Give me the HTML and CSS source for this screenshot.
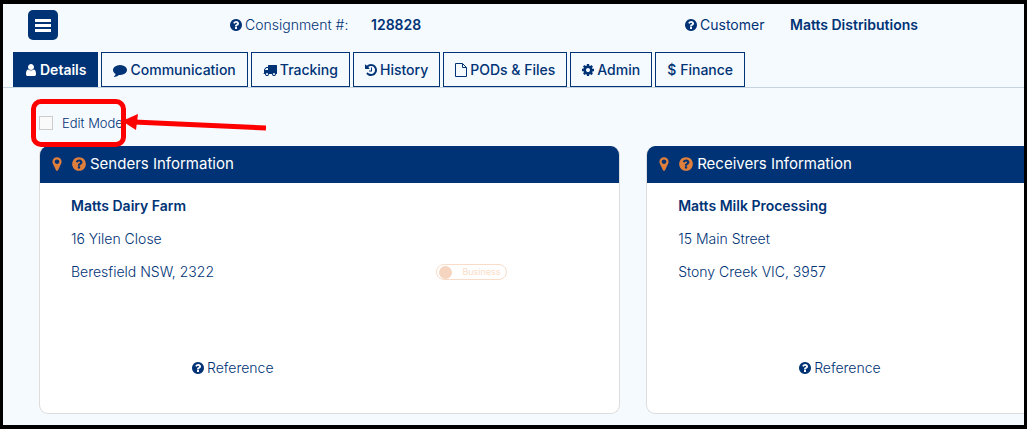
FILE: index.html
```html
<!DOCTYPE html>
<html lang="en">
<head>
    <meta charset="UTF-8">
    <meta name="viewport" content="width=device-width, initial-scale=1.0">
    <title>Consignment 128828</title>
    <link rel="stylesheet" href="styles.css">
</head>
<body>
    <!-- Shared icons -->
    <svg class="sprite" aria-hidden="true">
        <symbol id="icon-question" viewBox="128 0 1536 1792"><path d="M1024 1376v-192q0-14-9-23t-23-9h-192q-14 0-23 9t-9 23v192q0 14 9 23t23 9h192q14 0 23-9t9-23zm256-672q0-88-55.5-163t-138.5-116-170-41q-243 0-371 213-15 24 8 42l132 100q7 6 19 6 16 0 25-12 53-68 86-92 34-24 86-24 48 0 85.5 26t37.5 59q0 38-20 61t-68 45q-63 28-115.5 86.5t-52.5 125.5v36q0 14 9 23t23 9h192q14 0 23-9t9-23q0-19 21.5-49.5t54.5-49.5q32-18 49-28.5t46-35 44.5-48 28-60.5 12.5-81zm384 192q0 209-103 385.5t-279.5 279.5-385.5 103-385.5-103-279.5-279.5-103-385.5 103-385.5 279.5-279.5 385.5-103 385.5 103 279.5 279.5 103 385.5z"/></symbol>
        <symbol id="icon-marker" viewBox="384 0 1024 1792"><path d="M1152 640q0-106-75-181t-181-75-181 75-75 181 75 181 181 75 181-75 75-181zm256 0q0 109-33 179l-364 774q-16 33-47.5 52t-67.5 19-67.5-19-46.5-52l-365-774q-33-70-33-179 0-212 150-362t362-150 362 150 150 362z"/></symbol>
    </svg>

    <div class="page">
        <header class="topbar">
            <div>
                <button class="menu-btn" type="button" aria-label="Menu">
                    <svg viewBox="0 0 16 13"><path d="M0 0h16v3H0zM0 5h16v3H0zM0 10h16v3H0z"/></svg>
                </button>
            </div>
            <div class="field-label light"><svg class="icon"><use href="#icon-question"/></svg>Consignment #:</div>
            <div class="field-value">128828</div>
            <div class="field-label"><svg class="icon"><use href="#icon-question"/></svg>Customer</div>
            <div class="field-value">Matts Distributions</div>
        </header>

        <nav class="tabs">
            <a class="tab active" href="#details"><svg class="icon" viewBox="192 0 1408 1792"><path d="M1536 1399q0 109-62.5 187t-150.5 78h-854q-88 0-150.5-78t-62.5-187q0-85 8.5-160.5t31.5-152 58.5-131 94-89 134.5-34.5q131 128 313 128t313-128q76 0 134.5 34.5t94 89 58.5 131 31.5 152 8.5 160.5zm-256-887q0 159-112.5 271.5t-271.5 112.5-271.5-112.5-112.5-271.5 112.5-271.5 271.5-112.5 271.5 112.5 112.5 271.5z"/></svg>Details</a>
            <a class="tab" href="#communication"><svg class="icon wide" viewBox="0 0 1792 1792"><path d="M1792 896q0 174-120 321.5t-326 233-450 85.5q-70 0-145-8-198 175-460 242-49 14-114 22-17 2-30.5-9t-17.5-29v-1q-3-4-.5-12t2-10 4.5-9.5l6-9 7-8.5 8-9q7-8 31-34.5t34.5-38 31-39.5 32.5-51 27-59 26-76q-157-89-247.5-220t-90.5-281q0-130 71-248.5t191-204.5 286-136.5 348-50.5q244 0 450 85.5t326 233 120 321.5z"/></svg>Communication</a>
            <a class="tab" href="#tracking"><svg class="icon wide" viewBox="0 0 1792 1792"><path d="M640 1408q0-52-38-90t-90-38-90 38-38 90 38 90 90 38 90-38 38-90zm-384-512h384v-256h-158q-13 0-22 9l-195 195q-9 9-9 22v30zm1280 512q0-52-38-90t-90-38-90 38-38 90 38 90 90 38 90-38 38-90zm256-1088v1024q0 15-4 26.5t-13.5 18.5-16.5 11.5-23.5 6-22.5 2-25.5 0-22.5-.5q0 106-75 181t-181 75-181-75-75-181h-384q0 106-75 181t-181 75-181-75-75-181h-64q-3 0-22.5.5t-25.5 0-22.5-2-23.5-6-16.5-11.5-13.5-18.5-4-26.5q0-26 19-45t45-19v-320q0-8-.5-35t0-38 2.5-34.5 6.5-37 14-30.5 22.5-30l198-198q19-19 50.5-32t58.5-13h160v-192q0-26 19-45t45-19h1024q26 0 45 19t19 45z"/></svg>Tracking</a>
            <a class="tab" href="#history"><svg class="icon" viewBox="128 0 1536 1792"><path d="M1664 896q0 156-61 298t-164 245-245 164-298 61q-172 0-327-72.5t-264-204.5q-7-10-6.5-22.5t8.5-20.5l137-138q10-9 25-9 16 2 23 12 73 95 179 147t225 52q104 0 198.5-40.5t163.5-109.5 109.5-163.5 40.5-198.5-40.5-198.5-109.5-163.5-163.5-109.5-198.5-40.5q-98 0-188 35.5t-160 101.5l137 138q31 30 14 69-17 40-59 40h-448q-26 0-45-19t-19-45v-448q0-42 40-59 39-17 69 14l130 129q107-101 244.5-156.5t284.5-55.5q156 0 298 61t245 164 164 245 61 298zm-640-288v448q0 14-9 23t-23 9h-320q-14 0-23-9t-9-23v-64q0-14 9-23t23-9h224v-352q0-14 9-23t23-9h64q14 0 23 9t9 23z"/></svg>History</a>
            <a class="tab" href="#files"><svg class="icon outline" viewBox="0 0 12 14"><path d="M.5.5h7l4 4v9H.5zM7.5.5v4h4"/></svg>PODs &amp; Files</a>
            <a class="tab" href="#admin"><svg class="icon" viewBox="128 0 1536 1792"><path d="M1152 896q0-106-75-181t-181-75-181 75-75 181 75 181 181 75 181-75 75-181zm512-109v222q0 12-8 23t-20 13l-185 28q-19 54-39 91 35 50 107 138 10 12 10 25t-9 23q-27 37-99 108t-94 71q-12 0-26-9l-138-108q-44 23-91 38-16 136-29 186-7 28-36 28h-222q-14 0-24.5-8.5t-11.5-21.5l-28-184q-49-16-90-37l-141 107q-10 9-25 9-14 0-25-11-126-114-165-168-7-10-7-23 0-12 8-23 15-21 51-66.5t54-70.5q-27-50-41-99l-183-27q-13-2-21-12.5t-8-23.5v-222q0-12 8-23t19-13l186-28q14-46 39-92-40-57-107-138-10-12-10-24 0-10 9-23 26-36 98.5-107.5t94.5-71.5q13 0 26 10l138 107q44-23 91-38 16-136 29-186 7-28 36-28h222q14 0 24.5 8.5t11.5 21.5l28 184q49 16 90 37l142-107q9-9 24-9 13 0 25 10 129 119 165 170 7 8 7 22 0 12-8 23-15 21-51 66.5t-54 70.5q26 50 41 98l183 28q13 2 21 12.5t8 23.5z"/></svg>Admin</a>
            <a class="tab" href="#finance"><span class="dollar">$</span>Finance</a>
        </nav>

        <main class="content">
            <div class="edit-row">
                <label class="edit-mode"><input type="checkbox"> Edit Mode</label>
                <div class="highlight"></div>
                <svg class="arrow" viewBox="0 0 144 24"><path d="M12 8L144 14" stroke="#ff0000" stroke-width="5"/><path d="M0 7L16 0L14 16z" fill="#ff0000"/></svg>
            </div>

            <div class="cards">
                <section class="card">
                    <h2 class="card-header"><svg class="icon marker"><use href="#icon-marker"/></svg><svg class="icon help"><use href="#icon-question"/></svg>Senders Information</h2>
                    <div class="card-body">
                        <p class="name">Matts Dairy Farm</p>
                        <p>16 Yilen Close</p>
                        <div class="suburb-row">
                            <p>Beresfield NSW, 2322</p>
                            <label class="toggle"><input type="checkbox" disabled>Business</label>
                        </div>
                        <div class="reference"><svg class="icon"><use href="#icon-question"/></svg>Reference</div>
                    </div>
                </section>

                <section class="card">
                    <h2 class="card-header"><svg class="icon marker"><use href="#icon-marker"/></svg><svg class="icon help"><use href="#icon-question"/></svg>Receivers Information</h2>
                    <div class="card-body">
                        <p class="name">Matts Milk Processing</p>
                        <p>15 Main Street</p>
                        <div class="suburb-row">
                            <p>Stony Creek VIC, 3957</p>
                        </div>
                        <div class="reference"><svg class="icon"><use href="#icon-question"/></svg>Reference</div>
                    </div>
                </section>
            </div>
        </main>
    </div>
</body>
</html>
```
FILE: styles.css
```css
:root {
    --navy: #003375;
    --orange: #e07f3c;
    --page-bg: #f5faff;
    --line: #c5d3de;
}

* {
    margin: 0;
    padding: 0;
    box-sizing: border-box;
}

body {
    font-family: 'Inter', 'Liberation Sans', sans-serif;
    font-size: 14px;
    line-height: 20px;
    color: var(--navy);
}

.sprite {
    display: none;
}

.page {
    min-height: 100vh;
    border: 4px solid #000;
    border-width: 4px 3px;
    background-color: var(--page-bg);
    overflow: hidden;
}

.icon {
    width: 12px;
    height: 14px;
    margin-right: 3px;
    fill: currentColor;
    flex-shrink: 0;
}

.icon.wide {
    width: 14px;
}

.icon.outline {
    fill: none;
    stroke: currentColor;
}

/* Top bar */
.topbar {
    display: grid;
    grid-template-columns: 202fr 141fr 314fr 105fr 234fr;
    align-items: center;
    padding: 6px 0 12px 25px;
}

.menu-btn {
    display: flex;
    align-items: center;
    justify-content: center;
    width: 30px;
    height: 30px;
    border: none;
    border-radius: 5px;
    background-color: var(--navy);
    cursor: pointer;
}

.menu-btn svg {
    width: 16px;
    height: 13px;
    fill: #fff;
}

.field-label {
    display: flex;
    align-items: center;
    white-space: nowrap;
}

.light {
    font-weight: 300;
}

.field-value {
    font-weight: 600;
    white-space: nowrap;
}

/* Tabs */
.tabs {
    display: flex;
    gap: 3px;
    padding-left: 10px;
    border-bottom: 1px solid var(--line);
}

.tab {
    display: flex;
    align-items: center;
    height: 35px;
    padding: 0 11px;
    border: 1px solid var(--navy);
    font-weight: 500;
    color: var(--navy);
    text-decoration: none;
    white-space: nowrap;
}

.tab.active {
    background-color: var(--navy);
    color: #fff;
    font-weight: 600;
}

.dollar {
    margin-right: 4px;
}

/* Edit mode */
.content {
    padding-left: 36px;
}

.edit-row {
    position: relative;
    padding: 25px 0 11px;
}

.edit-mode {
    display: inline-flex;
    align-items: center;
    gap: 9px;
    font-size: 13px;
    font-weight: 300;
}

.edit-mode input {
    appearance: none;
    width: 14px;
    height: 14px;
    border: 1px solid #ccc;
    background-color: #fafafa;
}

.highlight {
    position: absolute;
    top: 11px;
    left: -8px;
    width: 95px;
    height: 48px;
    border: 5px solid #ff0000;
    border-radius: 10px;
    z-index: 1;
}

.arrow {
    position: absolute;
    top: 26px;
    left: 83px;
    width: 144px;
    height: 24px;
    z-index: 1;
}

/* Cards */
.cards {
    display: flex;
    gap: 26px;
}

.card {
    flex: 0 0 59%;
    border: 1px solid #ddd;
    border-top: none;
    border-radius: 9px;
    background-color: #fff;
    overflow: hidden;
}

.card-header {
    display: flex;
    align-items: center;
    height: 37px;
    padding: 0 0 2px 13px;
    margin: 0 -1px;
    background-color: var(--navy);
    color: #fff;
    font-size: 15px;
    font-weight: 400;
}

.card-header .icon {
    height: 16px;
    color: var(--orange);
}

.card-header .marker {
    width: 10px;
    margin-right: 10px;
}

.card-header .help {
    width: 14px;
    margin-right: 4px;
}

.card-body {
    display: flex;
    flex-direction: column;
    gap: 13px;
    padding: 13px 31px 35px;
    font-weight: 300;
}

.name {
    font-weight: 600;
}

.suburb-row {
    display: grid;
    grid-template-columns: 366fr 152fr;
    align-items: center;
}

.toggle {
    display: flex;
    align-items: center;
    justify-self: start;
    gap: 10px;
    height: 16px;
    padding: 0 5px 0 2px;
    border: 1px solid #f9dcc8;
    border-radius: 8px;
    color: #f9dcc8;
    font-size: 9px;
    font-weight: 400;
}

.toggle input {
    appearance: none;
    width: 13px;
    height: 13px;
    border-radius: 50%;
    background-color: #f5d5bf;
}

.reference {
    display: flex;
    align-items: center;
    padding: 63px 0 0 121px;
}
```
